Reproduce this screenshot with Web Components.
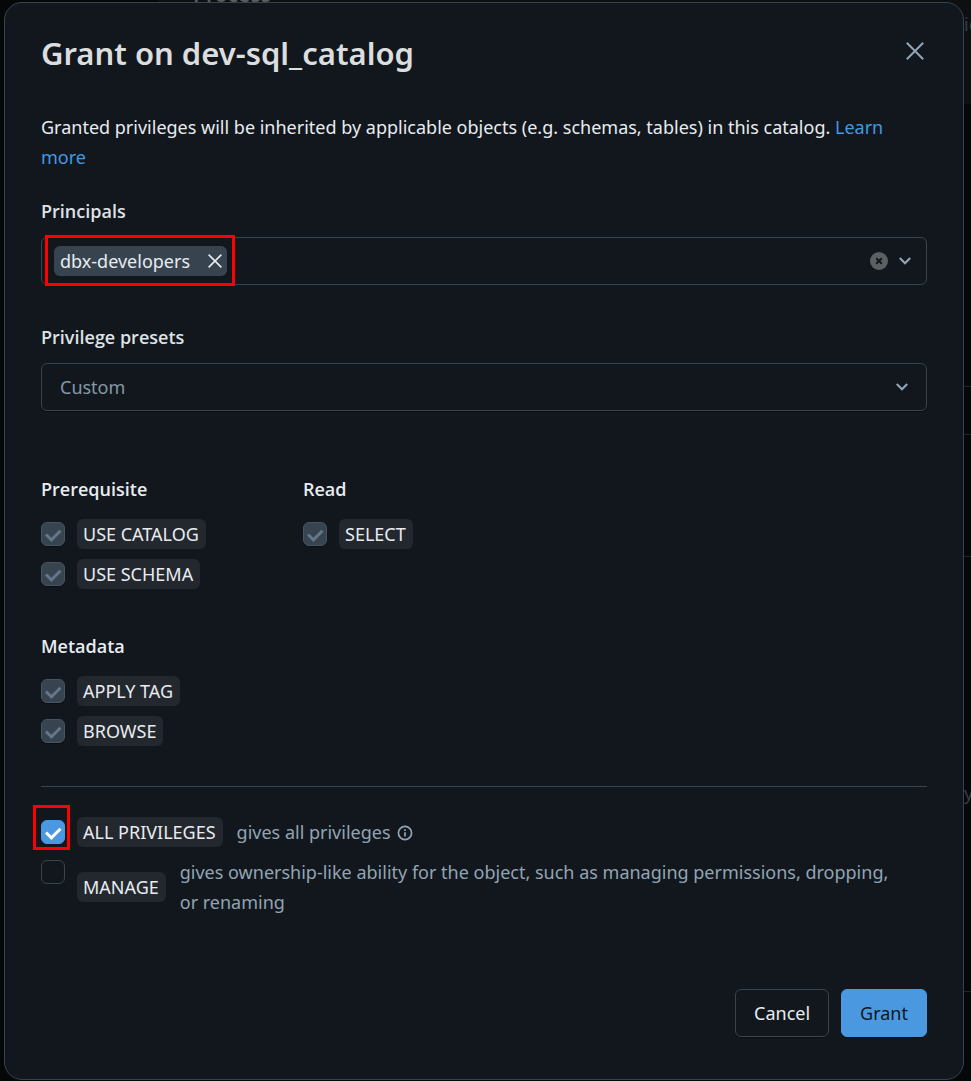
<!DOCTYPE html>
<html lang="en">
<head>
<meta charset="utf-8">
<meta name="viewport" content="width=device-width, initial-scale=1">
<title>Grant on dev-sql_catalog</title>
<style>
  html { background: #050708; }
  body {
    margin: 0;
    min-height: 100vh;
    box-sizing: border-box;
    padding: 2px 7px 1px 4px;
    display: flex;
    position: relative;
    overflow: hidden;
    font: 18px/30px "Noto Sans", "Open Sans", sans-serif;
    color: #e8ecf0;
    --heading-font: "Open Sans", "Noto Sans", sans-serif;
    --panel: #11171d;
    --line: #37444f;
    --muted: #92a4b3;
    --blue: #4a99e0;
  }
  grant-dialog { flex: 1; }
</style>
</head>
<body>
<page-backdrop></page-backdrop>
<grant-dialog>
  <span slot="title">Grant on dev-sql_catalog</span>
  <intro-text>Granted privileges will be inherited by applicable objects (e.g. schemas, tables) in this catalog.</intro-text>
  <principal-field label="Principals" value="dbx-developers"></principal-field>
  <preset-field label="Privilege presets" value="Custom"></preset-field>
  <privilege-grid>
    <privilege-group heading="Prerequisite">
      <privilege-option name="USE CATALOG" checked disabled></privilege-option>
      <privilege-option name="USE SCHEMA" checked disabled></privilege-option>
    </privilege-group>
    <privilege-group heading="Read">
      <privilege-option name="SELECT" checked disabled></privilege-option>
    </privilege-group>
    <privilege-group heading="Metadata">
      <privilege-option name="APPLY TAG" checked disabled></privilege-option>
      <privilege-option name="BROWSE" checked disabled></privilege-option>
    </privilege-group>
  </privilege-grid>
  <special-privileges>
    <privilege-option name="ALL PRIVILEGES" checked marked info>gives all privileges</privilege-option>
    <privilege-option name="MANAGE">gives ownership-like ability for the object, such as managing permissions, dropping, or renaming</privilege-option>
  </special-privileges>
  <action-button slot="footer" label="Cancel"></action-button>
  <action-button slot="footer" label="Grant" primary></action-button>
</grant-dialog>

<script>
const define = (name, render) => customElements.define(name, class extends HTMLElement {
  constructor() {
    super();
    this.attachShadow({ mode: 'open' });
  }
  connectedCallback() {
    this.shadowRoot.innerHTML = render(this);
  }
});

const chevron = `<svg width="14" height="10" viewBox="0 0 14 10" fill="none" stroke="#92a4b3" stroke-width="2.2" aria-hidden="true"><path d="M1.8 2 7 7.2 12.2 2"/></svg>`;
const cross = (size, color, width) => `<svg width="${size}" height="${size}" viewBox="0 0 18 18" fill="none" stroke="${color}" stroke-width="${width}" aria-hidden="true"><path d="M.8.8l16.4 16.4M17.2.8.8 17.2"/></svg>`;

/* Dimmed catalog page that shows round the edges of the dialog. */
define('page-backdrop', () => `
  <style>
    :host { position: absolute; inset: 0; overflow: hidden; color: #3a3e42; font-size: 18px; line-height: 24px; }
    .bar { height: 104px; background: linear-gradient(90deg, #050708 158px, #0d0f10 158px); }
    span, i { position: absolute; }
    .tab { left: 193px; top: -18px; color: #5a5c5e; font-weight: 600; font-size: 21px; line-height: 24px; }
    i { right: 0; width: 7px; height: 1px; background: #1e2224; }
  </style>
  <div class="bar"></div>
  <span class="tab">Process</span>
  <span style="left:964px;top:12px">ic</span>
  <span style="left:964px;top:781px">y</span>
  <i style="top:386px"></i><i style="top:434px"></i><i style="top:556px"></i><i style="top:991px"></i>`);

define('grant-dialog', () => `
  <style>
    :host { position: relative; display: flex; flex-direction: column; box-sizing: border-box; min-width: 0;
      padding: 29px 36px 42px; background: var(--panel); border: 1px solid var(--line); border-radius: 18px; }
    header { display: flex; justify-content: space-between; align-items: flex-start; margin-bottom: 38px; }
    h1 { margin: 0; font-size: 31px; line-height: 42px; font-weight: 600; color: #dcdddf; }
    button { display: flex; width: 24px; height: 24px; margin-top: 7px; padding: 0; border: 0; background: none; align-items: center; justify-content: center; }
    footer { display: flex; justify-content: flex-end; gap: 12px; margin-top: auto; }
  </style>
  <header><h1><slot name="title"></slot></h1><button aria-label="Close">${cross(18, '#92a4b3', 2)}</button></header>
  <slot></slot>
  <footer><slot name="footer"></slot></footer>`);

define('intro-text', () => `
  <style>
    :host { display: block; margin-bottom: 24px; }
    p { margin: 0; }
    a { color: #4299e0; text-decoration: none; }
  </style>
  <p><slot></slot> <a href="#learn">Learn more</a></p>`);

define('principal-field', el => `
  <style>
    :host { display: block; margin-bottom: 37px; }
    label { display: block; font-family: var(--heading-font); font-weight: 600; margin-bottom: 11px; color: #dfe2e5; }
    .box { display: flex; align-items: center; box-sizing: border-box; height: 48px; padding: 0 14px 0 12px;
      border: 1px solid var(--line); border-radius: 6px; position: relative; }
    .chip { display: flex; align-items: center; gap: 18px; height: 30px; padding: 0 5px 0 6px; border-radius: 6px; background: #37444f; }
    input { flex: 1; min-width: 0; border: 0; outline: 0; background: none; color: inherit; font: inherit; }
    button { display: flex; padding: 0; border: 0; background: none; }
    .clear { margin-right: 10px; }
    .mark { position: absolute; inset: -3px auto -2px 3px; box-sizing: border-box; width: 190px; border: 3px solid #f00; pointer-events: none; }
  </style>
  <label for="field">${el.getAttribute('label')}</label>
  <div class="box">
    <span class="chip"><span>${el.getAttribute('value')}</span><button aria-label="Remove">${cross(14, '#e8ecf0', 2)}</button></span>
    <input id="field">
    <button class="clear" aria-label="Clear"><svg width="18" height="18" viewBox="0 0 18 18"><circle cx="9" cy="9" r="9" fill="#5d6063"/><path d="M6.2 6.2l5.6 5.6M11.8 6.2l-5.6 5.6" stroke="#11171c" stroke-width="2"/></svg></button>
    ${chevron}
    <div class="mark"></div>
  </div>`);

define('preset-field', el => `
  <style>
    :host { display: block; margin-bottom: 63px; }
    label { display: block; font-family: var(--heading-font); font-weight: 600; margin-bottom: 11px; color: #dfe2e5; }
    .box { display: grid; align-items: center; }
    select { grid-area: 1 / 1; appearance: none; width: 100%; height: 48px; padding: 0 18px; border: 1px solid var(--line);
      border-radius: 6px; background: none; color: #8698a6; font: inherit; box-shadow: 0 1px 1px #0006; }
    svg { grid-area: 1 / 1; justify-self: end; margin-right: 18px; pointer-events: none; }
  </style>
  <label for="preset">${el.getAttribute('label')}</label>
  <div class="box"><select id="preset"><option>${el.getAttribute('value')}</option></select>${chevron}</div>`);

define('privilege-grid', () => `
  <style>
    :host { display: grid; grid-template-columns: repeat(2, 250px); gap: 42px 12px; padding-bottom: 40px; border-bottom: 1px solid var(--line); }
  </style>
  <slot></slot>`);

define('privilege-group', el => `
  <style>
    :host { display: flex; flex-direction: column; gap: 10px; }
    h2 { margin: 0 0 5px; font-family: var(--heading-font); font-size: 18px; line-height: 30px; font-weight: 600; }
  </style>
  <h2>${el.getAttribute('heading')}</h2>
  <slot></slot>`);

define('special-privileges', () => `
  <style>
    :host { display: flex; flex-direction: column; gap: 10px; padding: 30px 24px 0 0; }
  </style>
  <slot></slot>`);

define('privilege-option', el => `
  <style>
    :host { display: flex; align-items: flex-start; gap: 12px; }
    .tick { display: grid; position: relative; flex: none; margin-top: 3px; }
    input { grid-area: 1 / 1; appearance: none; box-sizing: border-box; width: 24px; height: 24px; margin: 0;
      border: 1px solid var(--line); border-radius: 6px; }
    input:checked { background: var(--blue); border-color: var(--blue); }
    input:disabled { background: #37444f; border-color: #475562; box-shadow: 0 1px 1px #0006; }
    svg { grid-area: 1 / 1; pointer-events: none; }
    .tick svg { display: none; }
    input:checked + svg { display: block; stroke: #fff; }
    input:disabled + svg { stroke: #64768a; }
    label { display: flex; align-items: center; gap: 14px; min-width: 0; }
    .name { flex: none; padding: 0 7px 0 6px; border-radius: 6px; background: #23282e; }
    .note { color: var(--muted); }
    .note svg { vertical-align: -2px; margin-left: 6px; }
    .mark { position: absolute; inset: -15px -5px -6px -8px; border: 3px solid #f00; pointer-events: none; }
  </style>
  <span class="tick">
    <input type="checkbox" id="box" ${el.hasAttribute('checked') ? 'checked' : ''} ${el.hasAttribute('disabled') ? 'disabled' : ''}>
    <svg width="24" height="24" viewBox="0 0 24 24" fill="none" stroke-width="3" aria-hidden="true"><path d="M5 12.5l5.4 5.4L19.5 8.8"/></svg>
    ${el.hasAttribute('marked') ? '<span class="mark"></span>' : ''}
  </span>
  <label for="box"><span class="name">${el.getAttribute('name')}</span>${el.textContent.trim() ? `<span class="note"><slot></slot>${el.hasAttribute('info') ? '<svg width="16" height="16" viewBox="0 0 16 16" fill="none" stroke="#92a4b3" stroke-width="1.7" aria-hidden="true"><circle cx="8" cy="8" r="6.6"/><path d="M8 7.2v4.2M8 4.3v1.8"/></svg>' : ''}</span>` : ''}</label>`);

define('action-button', el => {
  const primary = el.hasAttribute('primary');
  return `
  <style>
    :host { display: block; }
    button { height: 48px; padding: 0 18px; border: 1px solid ${primary ? 'var(--blue)' : 'var(--line)'}; border-radius: 6px;
      background: ${primary ? 'var(--blue)' : 'none'}; color: ${primary ? '#11171c' : '#e8ecf0'}; font: inherit; box-shadow: 0 1px 1px #0006; }
  </style>
  <button>${el.getAttribute('label')}</button>`;
});
</script>
</body>
</html>
